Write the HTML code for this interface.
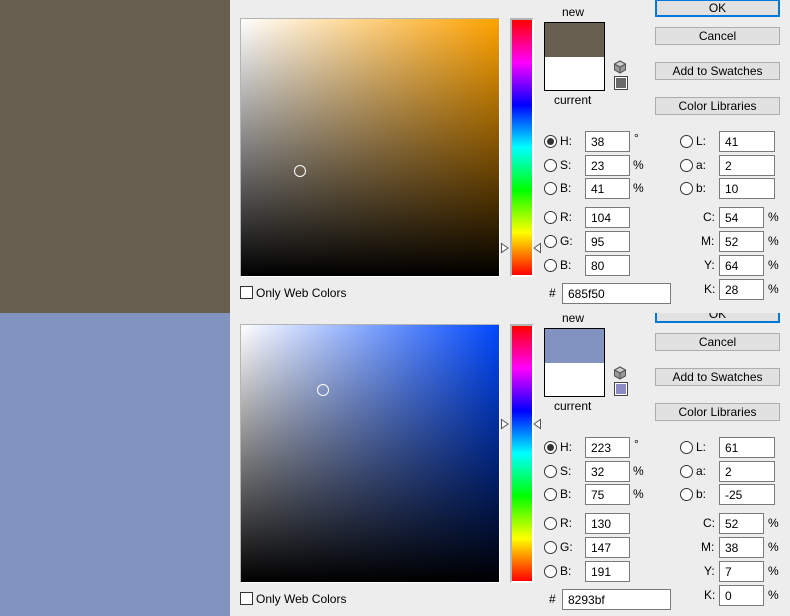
<!DOCTYPE html><html><head><style>
*{margin:0;padding:0;box-sizing:border-box}
body{width:790px;height:616px;overflow:hidden;background:#ededed;font-family:"Liberation Sans",sans-serif;font-size:12px;color:#000;position:relative}
.a{position:absolute}
.wrap{position:absolute;left:230px;width:560px;overflow:hidden}
.p{position:absolute;left:-230px;top:0;width:790px;height:306px}
.field{left:240px;top:18px;width:260px;height:259px;border:1px solid #b4b4b4;border-bottom-color:#fff;border-right-color:#fff}
.field .in{position:absolute;inset:0}
.hue{left:510px;top:18px;width:24px;height:259px;border:2px solid #b4b4b4;border-bottom-color:#fff;border-right-color:#fff;background:linear-gradient(#ff0000,#ff00ff 16.7%,#0000ff 33.3%,#00ffff 50%,#00ff00 66.7%,#ffff00 83.3%,#ff0000)}
.btn{left:655px;width:125px;height:18px;border:1px solid #adadad;background:#e1e1e1;text-align:center;line-height:16px;font-size:12px}
.rad{width:13px;height:13px;border:1px solid #333;border-radius:50%;background:#fff}
.inp{height:21px;border:1px solid #7a7a7a;background:#fff;padding-left:5px;line-height:20px;font-size:12px}
.lb{font-size:12px;line-height:15px}
.sw{left:544px;top:22px;width:61px;height:69px;border:1px solid #000;background:#fff}
.circ{width:12px;height:12px;border:1px solid #fff;border-radius:50%}
</style></head><body>
<div class="a" style="left:0;top:0;width:230px;height:313px;background:#685f50"></div>
<div class="a" style="left:0;top:313px;width:230px;height:303px;background:#8293bf"></div>

<!-- top panel -->
<div class="wrap" style="top:0;height:313px"><div class="p">
<div class="a field"><div class="in" style="background:linear-gradient(to bottom,rgba(0,0,0,0),#000),linear-gradient(to right,#fff,rgb(255,162,0))"></div></div>
<div class="a circ" style="left:294px;top:165px"></div>
<div class="a hue"></div>
<svg class="a" style="left:500px;top:242px" width="10" height="12"><path d="M1.5 1.5L8 6L1.5 10.5Z" fill="#fff" stroke="#555"/></svg>
<svg class="a" style="left:532px;top:242px" width="10" height="12"><path d="M8.5 1.5L2 6L8.5 10.5Z" fill="#fff" stroke="#555"/></svg>
<div class="a" style="left:240px;top:286px;width:13px;height:13px;border:1px solid #333;background:#fff"></div>
<div class="a lb" style="left:256px;top:286px">Only Web Colors</div>
<div class="a lb" style="left:562px;top:5px">new</div>
<div class="a sw"><div style="height:34px;background:#685f50"></div></div>
<div class="a lb" style="left:554px;top:93px">current</div>
<svg class="a" style="left:613px;top:60px" width="14" height="14" viewBox="0 0 14 14"><path d="M7 1L12.5 4V10L7 13L1.5 10V4Z" fill="#999" stroke="#555"/><path d="M1.5 4L7 7L12.5 4M7 7V13" stroke="#555" fill="none"/><path d="M7 1L12.5 4L7 7L1.5 4Z" fill="#ccc" stroke="#555"/></svg>
<div class="a" style="left:614px;top:76px;width:14px;height:14px;border:1px solid #444;background:#fff;padding:1px"><div style="width:100%;height:100%;background:#686868"></div></div>
<div class="a btn" style="top:-1px;border:2px solid #0078d7;line-height:14px">OK</div>
<div class="a btn" style="top:27px">Cancel</div>
<div class="a btn" style="top:62px">Add to Swatches</div>
<div class="a btn" style="top:97px">Color Libraries</div>
<div class="a rad" style="left:544px;top:135px"><div style="width:7px;height:7px;border-radius:50%;background:#333;margin:2px"></div></div>
<div class="a lb" style="left:560px;top:134px">H:</div><div class="a inp" style="left:585px;top:131px;width:45px">38</div><div class="a lb" style="left:634px;top:131px">°</div>
<div class="a rad" style="left:544px;top:159px"></div><div class="a lb" style="left:560px;top:158px">S:</div><div class="a inp" style="left:585px;top:155px;width:45px">23</div><div class="a lb" style="left:633px;top:158px">%</div>
<div class="a rad" style="left:544px;top:182px"></div><div class="a lb" style="left:560px;top:181px">B:</div><div class="a inp" style="left:585px;top:178px;width:45px">41</div><div class="a lb" style="left:633px;top:181px">%</div>
<div class="a rad" style="left:544px;top:211px"></div><div class="a lb" style="left:560px;top:210px">R:</div><div class="a inp" style="left:585px;top:207px;width:45px">104</div>
<div class="a rad" style="left:544px;top:235px"></div><div class="a lb" style="left:560px;top:234px">G:</div><div class="a inp" style="left:585px;top:231px;width:45px">95</div>
<div class="a rad" style="left:544px;top:259px"></div><div class="a lb" style="left:560px;top:258px">B:</div><div class="a inp" style="left:585px;top:255px;width:45px">80</div>
<div class="a lb" style="left:549px;top:286px">#</div><div class="a inp" style="left:562px;top:283px;width:109px">685f50</div>
<div class="a rad" style="left:680px;top:135px"></div><div class="a lb" style="left:696px;top:134px">L:</div><div class="a inp" style="left:719px;top:131px;width:56px">41</div>
<div class="a rad" style="left:680px;top:159px"></div><div class="a lb" style="left:696px;top:158px">a:</div><div class="a inp" style="left:719px;top:155px;width:56px">2</div>
<div class="a rad" style="left:680px;top:182px"></div><div class="a lb" style="left:696px;top:181px">b:</div><div class="a inp" style="left:719px;top:178px;width:56px">10</div>
<div class="a lb" style="left:703px;top:210px">C:</div><div class="a inp" style="left:719px;top:207px;width:45px">54</div><div class="a lb" style="left:768px;top:210px">%</div>
<div class="a lb" style="left:701px;top:234px">M:</div><div class="a inp" style="left:719px;top:231px;width:45px">52</div><div class="a lb" style="left:768px;top:234px">%</div>
<div class="a lb" style="left:704px;top:258px">Y:</div><div class="a inp" style="left:719px;top:255px;width:45px">64</div><div class="a lb" style="left:768px;top:258px">%</div>
<div class="a lb" style="left:704px;top:282px">K:</div><div class="a inp" style="left:719px;top:279px;width:45px">28</div><div class="a lb" style="left:768px;top:282px">%</div>
</div></div>

<!-- bottom panel -->
<div class="wrap" style="top:313px;height:303px"><div class="p" style="top:-7px">
<div class="a field"><div class="in" style="background:linear-gradient(to bottom,rgba(0,0,0,0),#000),linear-gradient(to right,#fff,rgb(0,72,255))"></div></div>
<div class="a circ" style="left:317px;top:78px"></div>
<div class="a hue"></div>
<svg class="a" style="left:500px;top:112px" width="10" height="12"><path d="M1.5 1.5L8 6L1.5 10.5Z" fill="#fff" stroke="#555"/></svg>
<svg class="a" style="left:532px;top:112px" width="10" height="12"><path d="M8.5 1.5L2 6L8.5 10.5Z" fill="#fff" stroke="#555"/></svg>
<div class="a" style="left:240px;top:286px;width:13px;height:13px;border:1px solid #333;background:#fff"></div>
<div class="a lb" style="left:256px;top:286px">Only Web Colors</div>
<div class="a lb" style="left:562px;top:5px">new</div>
<div class="a sw"><div style="height:34px;background:#8293bf"></div></div>
<div class="a lb" style="left:554px;top:93px">current</div>
<svg class="a" style="left:613px;top:60px" width="14" height="14" viewBox="0 0 14 14"><path d="M7 1L12.5 4V10L7 13L1.5 10V4Z" fill="#999" stroke="#555"/><path d="M1.5 4L7 7L12.5 4M7 7V13" stroke="#555" fill="none"/><path d="M7 1L12.5 4L7 7L1.5 4Z" fill="#ccc" stroke="#555"/></svg>
<div class="a" style="left:614px;top:76px;width:14px;height:14px;border:1px solid #444;background:#fff;padding:1px"><div style="width:100%;height:100%;background:#8c8cc4"></div></div>
<div class="a btn" style="top:-1px;border:2px solid #0078d7;line-height:14px">OK</div>
<div class="a btn" style="top:27px">Cancel</div>
<div class="a btn" style="top:62px">Add to Swatches</div>
<div class="a btn" style="top:97px">Color Libraries</div>
<div class="a rad" style="left:544px;top:135px"><div style="width:7px;height:7px;border-radius:50%;background:#333;margin:2px"></div></div>
<div class="a lb" style="left:560px;top:134px">H:</div><div class="a inp" style="left:585px;top:131px;width:45px">223</div><div class="a lb" style="left:634px;top:131px">°</div>
<div class="a rad" style="left:544px;top:159px"></div><div class="a lb" style="left:560px;top:158px">S:</div><div class="a inp" style="left:585px;top:155px;width:45px">32</div><div class="a lb" style="left:633px;top:158px">%</div>
<div class="a rad" style="left:544px;top:182px"></div><div class="a lb" style="left:560px;top:181px">B:</div><div class="a inp" style="left:585px;top:178px;width:45px">75</div><div class="a lb" style="left:633px;top:181px">%</div>
<div class="a rad" style="left:544px;top:211px"></div><div class="a lb" style="left:560px;top:210px">R:</div><div class="a inp" style="left:585px;top:207px;width:45px">130</div>
<div class="a rad" style="left:544px;top:235px"></div><div class="a lb" style="left:560px;top:234px">G:</div><div class="a inp" style="left:585px;top:231px;width:45px">147</div>
<div class="a rad" style="left:544px;top:259px"></div><div class="a lb" style="left:560px;top:258px">B:</div><div class="a inp" style="left:585px;top:255px;width:45px">191</div>
<div class="a lb" style="left:549px;top:286px">#</div><div class="a inp" style="left:562px;top:283px;width:109px">8293bf</div>
<div class="a rad" style="left:680px;top:135px"></div><div class="a lb" style="left:696px;top:134px">L:</div><div class="a inp" style="left:719px;top:131px;width:56px">61</div>
<div class="a rad" style="left:680px;top:159px"></div><div class="a lb" style="left:696px;top:158px">a:</div><div class="a inp" style="left:719px;top:155px;width:56px">2</div>
<div class="a rad" style="left:680px;top:182px"></div><div class="a lb" style="left:696px;top:181px">b:</div><div class="a inp" style="left:719px;top:178px;width:56px">-25</div>
<div class="a lb" style="left:703px;top:210px">C:</div><div class="a inp" style="left:719px;top:207px;width:45px">52</div><div class="a lb" style="left:768px;top:210px">%</div>
<div class="a lb" style="left:701px;top:234px">M:</div><div class="a inp" style="left:719px;top:231px;width:45px">38</div><div class="a lb" style="left:768px;top:234px">%</div>
<div class="a lb" style="left:704px;top:258px">Y:</div><div class="a inp" style="left:719px;top:255px;width:45px">7</div><div class="a lb" style="left:768px;top:258px">%</div>
<div class="a lb" style="left:704px;top:282px">K:</div><div class="a inp" style="left:719px;top:279px;width:45px">0</div><div class="a lb" style="left:768px;top:282px">%</div>
</div></div>
</body></html>
